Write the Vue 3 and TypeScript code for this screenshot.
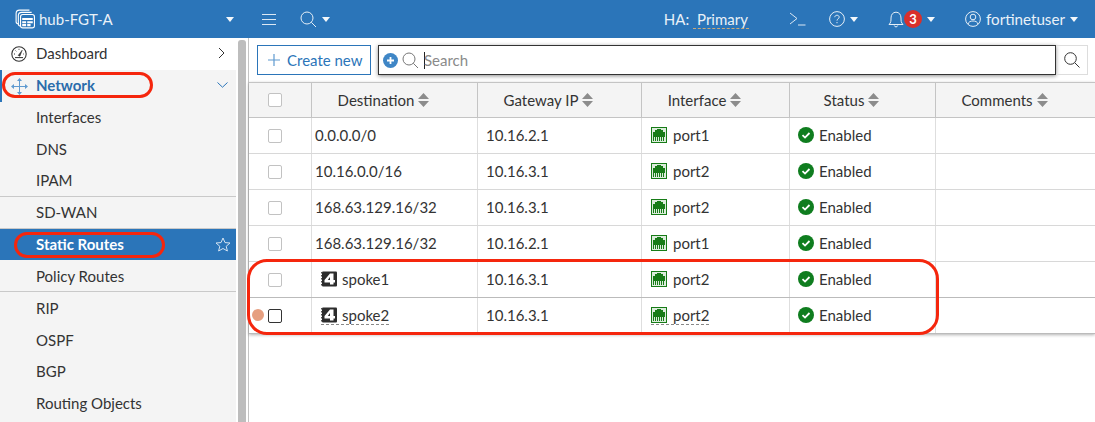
<script setup lang="ts">
interface NavItem {
  label: string;
  sep?: boolean;
  active?: boolean;
}

interface RouteRow {
  dest: string;
  gateway: string;
  port: string;
  tunnel?: boolean;
  hovered?: boolean;
}

const navItems: NavItem[] = [
  { label: 'Interfaces' },
  { label: 'DNS' },
  { label: 'IPAM', sep: true },
  { label: 'SD-WAN', sep: true },
  { label: 'Static Routes', active: true },
  { label: 'Policy Routes', sep: true },
  { label: 'RIP' },
  { label: 'OSPF' },
  { label: 'BGP' },
  { label: 'Routing Objects' },
];

const columns = ['Destination', 'Gateway IP', 'Interface', 'Status', 'Comments'];

const rows: RouteRow[] = [
  { dest: '0.0.0.0/0', gateway: '10.16.2.1', port: 'port1' },
  { dest: '10.16.0.0/16', gateway: '10.16.3.1', port: 'port2' },
  { dest: '168.63.129.16/32', gateway: '10.16.3.1', port: 'port2' },
  { dest: '168.63.129.16/32', gateway: '10.16.2.1', port: 'port1' },
  { dest: 'spoke1', gateway: '10.16.3.1', port: 'port2', tunnel: true },
  { dest: 'spoke2', gateway: '10.16.3.1', port: 'port2', tunnel: true, hovered: true },
];
</script>

<template>
  <div class="app">
    <header class="top">
      <div class="brand">
        <svg class="logo" width="20" height="20" viewBox="0 0 18 18" fill="none" stroke="#fff" stroke-width="1">
          <path d="M3.5 13.5 C1.8 13.5 1 12.8 1 11.5 V4 C1 2 2 1 4 1 H13" />
          <path d="M5.5 15.5 C4 15.5 3 14.8 3 13.5 V6 C3 4 4 3 6 3 H15" />
          <rect x="5" y="5" width="12.5" height="12" rx="2" fill="#2b75b9" />
          <path d="M6.5 8 H16 V10 H6.5 Z M6.5 11 H10 V12.8 H6.5 Z M11 11 H16 V12.8 H11 Z M6.5 13.6 H10 V15.5 H6.5 Z M11 13.6 H14 V15.5 H11 Z" fill="#fff" stroke="none" />
        </svg>
        <span class="host">hub-FGT-A</span>
        <i class="caret host-caret"></i>
      </div>
      <svg class="ico" width="15" height="13" viewBox="0 0 15 13" stroke="#dbe8f4" stroke-width="1">
        <path d="M0 1.5 H14 M0 6.5 H14 M0 11.5 H14" />
      </svg>
      <div class="search-tool">
        <svg width="17" height="17" viewBox="0 0 17 17" fill="none" stroke="#e6eff7" stroke-width="1">
          <circle cx="7" cy="7" r="6" />
          <path d="M11.3 11.3 L16 16" />
        </svg>
        <i class="caret"></i>
      </div>
      <div class="top-right">
        <span class="ha">HA: <span class="ha-val">Primary</span></span>
        <svg class="term" width="17" height="14" viewBox="0 0 17 14" fill="none" stroke="#dbe8f4" stroke-width="1">
          <path d="M1 1 L8 6.5 L1 12 M9 13 H16.5" />
        </svg>
        <div class="tool help">
          <svg width="16" height="16" viewBox="0 0 16 16" fill="none" stroke="#e6eff7" stroke-width="1">
            <circle cx="8" cy="8" r="7.4" />
            <path d="M5.8 6.2 C5.8 3.6 10.2 3.6 10.2 6.2 C10.2 7.8 8 7.8 8 9.6" />
            <path d="M8 11 V12.2" />
          </svg>
          <i class="caret"></i>
        </div>
        <div class="tool bell">
          <svg width="16" height="17" viewBox="0 0 16 17" fill="none" stroke="#e6eff7" stroke-width="1">
            <path d="M1 13.5 C3 11.5 3 10 3 7 C3 3.5 5 1.2 8 1.2 C11 1.2 13 3.5 13 7 C13 10 13 11.5 15 13.5 Z" />
            <path d="M6.3 14.5 C6.6 16.4 9.4 16.4 9.7 14.5" />
          </svg>
          <span class="badge">3</span>
          <i class="caret"></i>
        </div>
        <div class="tool user">
          <svg width="16" height="16" viewBox="0 0 16 16" fill="none" stroke="#e6eff7" stroke-width="1">
            <circle cx="8" cy="8" r="7.4" />
            <circle cx="8" cy="6" r="2.8" />
            <path d="M3 13.2 C3.6 10.6 5.6 10 8 10 C10.4 10 12.4 10.6 13 13.2" />
          </svg>
          <span class="uname">fortinetuser</span>
          <i class="caret"></i>
        </div>
      </div>
    </header>

    <div class="body">
      <aside class="side">
        <nav class="nav">
          <a class="nav-row dash">
            <svg class="nav-ico" width="16" height="16" viewBox="0 0 16 16" fill="none" stroke="#333" stroke-width="1.1">
              <circle cx="8" cy="8" r="7.2" />
              <path d="M7.2 9.4 L11.2 4.2 L8.9 10.2 Z" fill="#333" stroke-width="0.6" />
              <path d="M3 8 H4 M4.6 4.6 L5.3 5.3 M8 2.8 V3.8 M12.3 8 H13 M4 11.6 H12" stroke-width="1" />
            </svg>
            <span>Dashboard</span>
            <svg class="chev" width="7" height="12" viewBox="0 0 7 12" fill="none" stroke="#333" stroke-width="1">
              <path d="M1 1 L6 6 L1 11" />
            </svg>
          </a>
          <a class="nav-row net">
            <svg class="nav-ico" width="17" height="17" viewBox="0 0 17 17" fill="#5f9ad0">
              <path d="M1 8.5 H16 M8.5 1 V16" stroke="#5f9ad0" stroke-width="1" fill="none" />
              <path d="M8.5 0 L11 3 H6 Z M8.5 17 L11 14 H6 Z M0 8.5 L3 6 V11 Z M17 8.5 L14 6 V11 Z" />
            </svg>
            <span>Network</span>
            <svg class="chev" width="11" height="6" viewBox="0 0 11 6" fill="none" stroke="#2b75b9" stroke-width="1">
              <path d="M0.5 0.5 L5.5 5.2 L10.5 0.5" />
            </svg>
          </a>
          <a
            v-for="item in navItems"
            :key="item.label"
            class="nav-row sub"
            :class="{ active: item.active, sep: item.sep }"
          >
            <span>{{ item.label }}</span>
            <svg v-if="item.active" class="star" width="16" height="15" viewBox="0 0 16 15" fill="none" stroke="#d5e4f2" stroke-width="1">
              <path d="M8 1 L10 5.6 L15 6 L11.2 9.3 L12.4 14 L8 11.5 L3.6 14 L4.8 9.3 L1 6 L6 5.6 Z" />
            </svg>
          </a>
        </nav>
        <div class="scroll"><div class="thumb"></div></div>
      </aside>

      <main class="main">
        <div class="toolbar">
          <button class="create">
            <svg width="14" height="14" viewBox="0 0 14 14" stroke="#5f9ad0" stroke-width="1.2">
              <path d="M7 1 V13 M1 7 H13" />
            </svg>
            Create new
          </button>
          <div class="search">
            <span class="add">
              <svg width="9" height="9" viewBox="0 0 9 9" stroke="#fff" stroke-width="1.8">
                <path d="M4.5 1 V8 M1 4.5 H8" />
              </svg>
            </span>
            <svg width="17" height="17" viewBox="0 0 17 17" fill="none" stroke="#777" stroke-width="1">
              <circle cx="7" cy="7" r="6" />
              <path d="M11.3 11.3 L16 16" />
            </svg>
            <span class="cursor"></span>
            <span class="placeholder">Search</span>
          </div>
          <div class="search-btn">
            <svg width="16" height="16" viewBox="0 0 16 16" fill="none" stroke="#333" stroke-width="1">
              <circle cx="6.5" cy="6.5" r="5.8" />
              <path d="M10.8 10.8 L15.5 15.5" />
            </svg>
          </div>
        </div>

        <div class="table">
          <div class="tr head">
            <div class="td check"><span class="box"></span></div>
            <div v-for="col in columns" :key="col" class="td th">
              {{ col }}
              <svg class="sort" width="11" height="14" viewBox="0 0 11 14" fill="#8c8c8c">
                <path d="M5.5 0 L11 6 H0 Z M5.5 14 L11 8 H0 Z" />
              </svg>
            </div>
          </div>
          <div v-for="(row, i) in rows" :key="i" class="tr" :class="{ hovered: row.hovered }">
            <div class="td check">
              <i v-if="row.hovered" class="dot"></i>
              <span class="box"></span>
            </div>
            <div class="td dest">
              <span class="cell" :class="{ dashed: row.hovered, tunnel: row.tunnel }">
                <svg v-if="row.tunnel" class="tun" width="16" height="16" viewBox="0 0 16 16">
                  <rect x="1" y="0.5" width="15" height="15" rx="1" fill="#2d2d2d" />
                  <path d="M0.5 1 V15.5" stroke="#555" stroke-width="1" stroke-dasharray="1.5 1.5" />
                  <path d="M9 2.5 H12.5 V9 H14 V11.5 H12.5 V13.5 H9 V11.5 H3.5 V9 Z M9 6 L6.8 9 H9 Z" fill="#fff" fill-rule="evenodd" />
                </svg>
                {{ row.dest }}
              </span>
            </div>
            <div class="td">{{ row.gateway }}</div>
            <div class="td">
              <span class="cell port-cell" :class="{ dashed: row.hovered }">
                <svg class="port" width="16" height="16" viewBox="0 0 16 16">
                  <rect x="0.5" y="0.5" width="15" height="15" fill="#dcecdc" stroke="#177c17" />
                  <path d="M2 5 H4 V3 H6 V2 H10 V3 H12 V5 H14 V10 H2 Z" fill="#177c17" />
                  <path d="M2.5 10 V14 M4.5 10 V14 M6.5 10 V14 M8.5 10 V14 M10.5 10 V14 M12.5 10 V14" stroke="#177c17" stroke-width="1" />
                </svg>
                {{ row.port }}
              </span>
            </div>
            <div class="td">
              <svg class="ok" width="16" height="16" viewBox="0 0 16 16">
                <circle cx="8" cy="8" r="8" fill="#0f7d1f" />
                <path d="M4.5 8.2 L7 10.6 L11.5 6" fill="none" stroke="#fff" stroke-width="1.8" />
              </svg>
              Enabled
            </div>
            <div class="td"></div>
          </div>
        </div>
      </main>
    </div>

    <i class="mark mark-net"></i>
    <i class="mark mark-static"></i>
    <i class="mark mark-rows"></i>
  </div>
</template>

<style scoped>
.app {
  position: relative;
  width: 1095px;
  height: 422px;
  overflow: hidden;
  background: #fff;
  color: #333;
  font-family: Lato, "Open Sans", sans-serif;
  font-size: 15px;
}

.top {
  display: flex;
  align-items: center;
  height: 38px;
  padding-left: 15px;
  background: #2b75b9;
  color: #e9f1f8;
}

.brand {
  display: flex;
  align-items: center;
  width: 247px;
}

.logo {
  margin-right: 4px;
}

.host {
  font-size: 15px;
}

.host-caret {
  margin-left: auto;
  margin-right: 28px;
}

.caret {
  display: inline-block;
  width: 0;
  height: 0;
  border-left: 4.5px solid transparent;
  border-right: 4.5px solid transparent;
  border-top: 5px solid #f4f8fb;
}

.search-tool {
  display: flex;
  align-items: center;
  gap: 5px;
  margin-left: 23px;
}

.top-right {
  display: flex;
  align-items: center;
  margin-left: auto;
  padding-right: 17px;
}

.ha {
  margin-right: 40px;
  white-space: pre;
}

.ha-val {
  border-bottom: 1px dashed #c9a97a;
  padding: 0 1px 0 4px;
}

.term {
  margin-right: 23px;
}

.tool {
  display: flex;
  align-items: center;
}

.help {
  gap: 5px;
  margin-right: 30px;
}

.bell {
  margin-right: 30px;
}

.badge {
  display: grid;
  place-items: center;
  width: 18px;
  height: 18px;
  margin: 0 5px 0 0;
  border-radius: 50%;
  background: #d9302b;
  color: #fff;
  font-size: 13px;
  font-weight: 700;
}

.user .uname {
  margin: 0 5px;
  font-size: 15.2px;
}

.body {
  display: flex;
  height: 384px;
}

.side {
  display: flex;
  width: 249px;
  flex: none;
  box-sizing: border-box;
  border-right: 1px solid #c4c4c4;
}

.nav {
  width: 236px;
  flex: none;
  background: #f4f4f4;
}

.nav-row {
  display: flex;
  align-items: center;
  height: 31.75px;
  padding-left: 36px;
  box-sizing: border-box;
}

.dash {
  position: relative;
  background: #fff;
  padding-bottom: 1px;
}

.net {
  position: relative;
  color: #2b6cab;
  font-weight: 700;
  border-left: 2px solid #2b75b9;
  padding-left: 34px;
  padding-bottom: 1px;
}

.nav-ico {
  position: absolute;
  left: 11px;
  top: 8px;
}

.net .nav-ico {
  left: 9px;
}

.chev {
  margin-left: auto;
  margin-right: 11px;
}

.net .chev {
  margin-right: 8px;
}

.sub.sep {
  border-bottom: 1px solid #c9c9c9;
}

.active {
  background: #2b75b9;
  color: #fff;
  font-weight: 700;
}

.star {
  margin-left: auto;
  margin-right: 5px;
}

.scroll {
  flex: 1;
  background: #fff;
  padding: 2px 2px 0;
}

.thumb {
  height: 382px;
  background: #bdbdbd;
  border-radius: 3px 3px 0 0;
}

.main {
  flex: 1;
  min-width: 0;
}

.toolbar {
  display: flex;
  align-items: center;
  height: 44px;
  padding: 0 7px 0 8px;
  box-sizing: border-box;
}

.create {
  display: flex;
  align-items: center;
  gap: 6px;
  width: 114px;
  height: 30px;
  padding: 0 0 0 9px;
  border: 1px solid #2b75b9;
  background: #fff;
  color: #2b75b9;
  font: inherit;
}

.search {
  display: flex;
  align-items: center;
  width: 678px;
  height: 30px;
  margin-left: 7px;
  padding-left: 4px;
  box-sizing: border-box;
  border: 1px solid #333;
  box-shadow: 0 1px 4px rgba(0, 0, 0, 0.45);
  gap: 4px;
  color: #8a8a8a;
}

.add {
  display: grid;
  place-items: center;
  width: 15px;
  height: 15px;
  border-radius: 50%;
  background: #3f86c6;
}

.cursor {
  width: 1px;
  height: 17px;
  margin-left: 1px;
  margin-right: -5px;
  background: #222;
}

.search-btn {
  display: grid;
  place-items: center;
  width: 32px;
  height: 30px;
  box-sizing: border-box;
  border: 1px solid #ddd;
  border-left: 0;
}

.table {
  border-top: 1px solid #c4c4c4;
  box-shadow: 0 1px 3px rgba(0, 0, 0, 0.3);
}

.tr {
  display: grid;
  grid-template-columns: 62px 166px 164px 148px 146px 1fr;
  height: 36px;
  border-bottom: 1px solid #d8d8d8;
  box-sizing: border-box;
}

.tr.hovered {
  border-bottom-color: #bbb;
}

.tr:nth-child(6) {
  border-bottom-color: #bbb;
}

.head {
  height: 35px;
  background: #f4f4f4;
  border-bottom-color: #c4c4c4;
}

.td {
  display: flex;
  align-items: center;
  padding: 0 0 1px 8px;
  border-left: 1px solid #dedede;
  white-space: nowrap;
}

.head .td {
  border-left-color: #c4c4c4;
}

.td.dest {
  padding-left: 3px;
}

.cell {
  display: inline-flex;
  align-items: center;
  line-height: 18px;
}

.cell.tunnel {
  margin-left: 6px;
}

.cell.port-cell {
  margin-left: 1px;
}

.check {
  position: relative;
  justify-content: center;
  border-left: 0;
  padding: 0 10px 0 0;
}

.th {
  justify-content: center;
  padding: 0 22px 1px 0;
  gap: 4px;
}

.box {
  width: 12px;
  height: 12px;
  border: 1px solid #c2c2c2;
  border-radius: 2px;
  background: #fff;
}

.hovered .box {
  border-color: #333;
}

.dot {
  position: absolute;
  left: 3px;
  top: 11px;
  width: 12px;
  height: 12px;
  border-radius: 50%;
  background: #e69f80;
}

.tun {
  margin-right: 5px;
}

.port {
  margin-right: 6px;
}

.ok {
  margin-right: 5px;
}

.dashed {
  border-bottom: 1px dashed #888;
}

.mark {
  position: absolute;
  box-sizing: border-box;
  border: 3px solid #f5260d;
  pointer-events: none;
}

.mark-net {
  left: 2px;
  top: 72px;
  width: 151px;
  height: 26px;
  border-radius: 13px;
}

.mark-static {
  left: 14px;
  top: 232px;
  width: 151px;
  height: 26px;
  border-radius: 13px;
}

.mark-rows {
  left: 247px;
  top: 259px;
  width: 692px;
  height: 76px;
  border-radius: 20px;
}
</style>
